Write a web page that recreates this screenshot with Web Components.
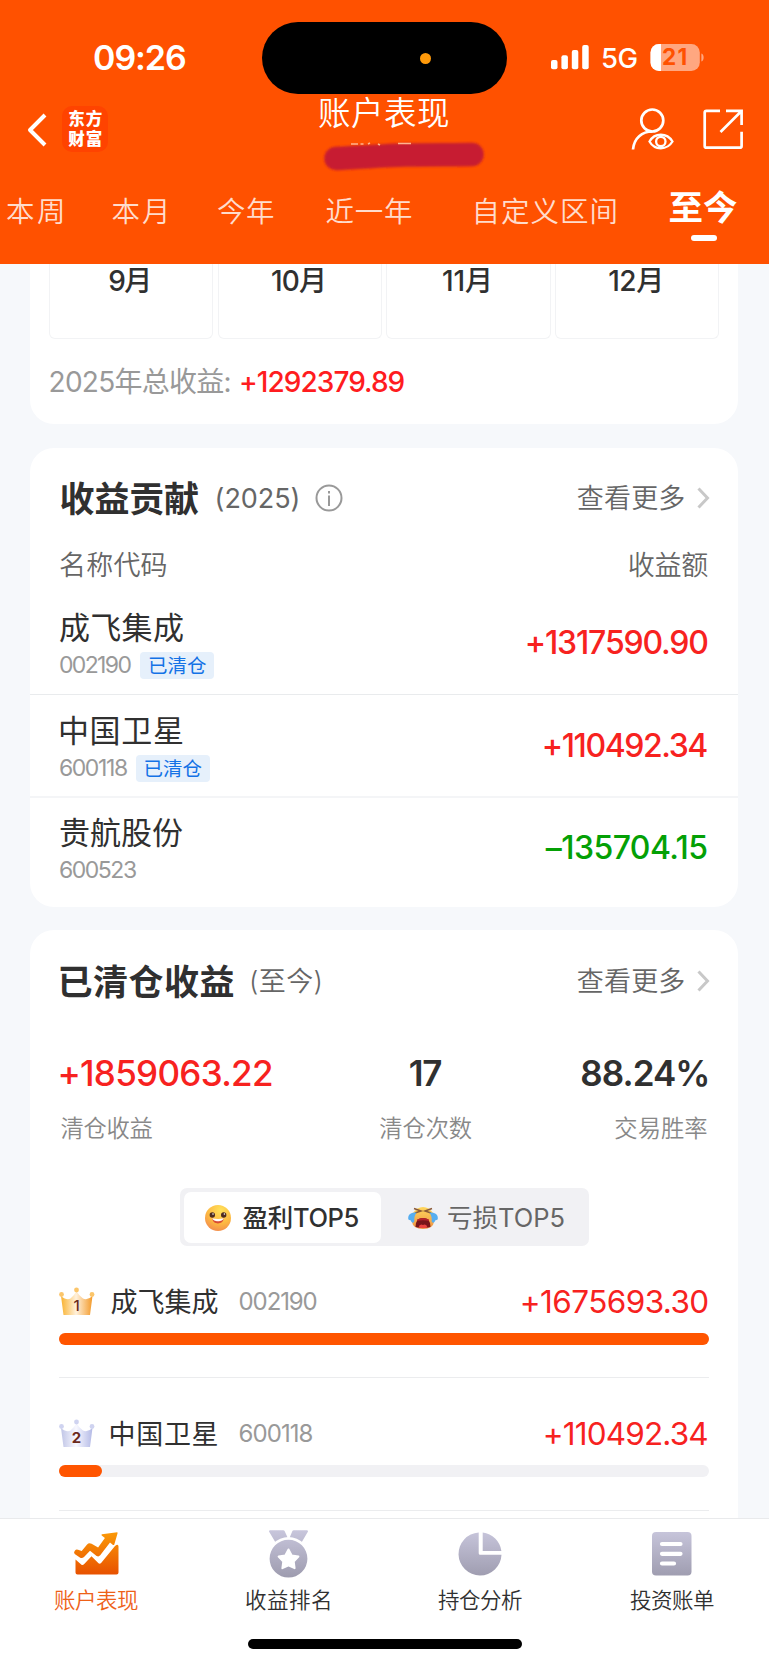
<!DOCTYPE html>
<html lang="zh-CN">
<head>
<meta charset="utf-8">
<title>账户表现</title>
<style>
html,body{margin:0;padding:0}
body{width:769px;height:1665px;overflow:hidden;background:#f6f8fb;font-family:Inter,"Noto Sans CJK SC",sans-serif;color:#303030}
</style>
</head>
<body>
<account-app></account-app>
<script>
const define = (name, html, setup) => customElements.define(name, class extends HTMLElement {
  connectedCallback() {
    if (this.shadowRoot) return;
    const t = document.createElement('template');
    t.innerHTML = html;
    this.attachShadow({ mode: 'open' }).append(t.content.cloneNode(true));
    if (setup) setup(this, this.shadowRoot);
  }
});

/* ---------- page ---------- */
define('account-app', `
<style>
:host{display:flex;flex-direction:column;width:769px;height:1665px;overflow:hidden}
main{flex:1;min-height:0;overflow:hidden;padding:0 30.700px 0 29.600px}
contribution-card{margin-top:24px}
cleared-card{margin-top:23px}
</style>
<app-header></app-header>
<main>
  <months-card></months-card>
  <contribution-card></contribution-card>
  <cleared-card></cleared-card>
</main>
<tab-bar></tab-bar>`);

/* ---------- header ---------- */
define('app-header', `
<style>
:host{display:flex;flex-direction:column;height:264px;background:#ff5100;color:#fff;flex:none}
</style>
<status-bar></status-bar>
<nav-bar></nav-bar>
<range-tabs></range-tabs>`);

define('status-bar', `
<style>
:host{display:grid;grid-template-columns:262px 245px 1fr;height:94px;flex:none}
.time{font-size:34px;font-weight:600;line-height:36px;padding:40px 0 0 94px}
.island{margin-top:22px;height:72px;border-radius:36px;background:#000;display:flex;align-items:center}
.island i{width:11px;height:11px;border-radius:50%;background:#ff9a0a;margin-left:158px}
.right{display:flex;padding-left:44px;height:30px;margin-top:43px}
.bars{width:39px;height:30px}
.g{font-size:27.5px;font-weight:500;line-height:31px;margin-left:12px}
.bat{margin-left:13px;width:55px;height:30px;display:grid}
.bat>*{grid-area:1/1}
.bat fit-text{font-size:22.5px;font-weight:700;line-height:28px;color:#ff5100;margin-left:13.500px}
</style>
<div class="time"><fit-text w="92">09:26</fit-text></div>
<div class="island"><i></i></div>
<div class="right">
  <svg class="bars" viewBox="0 0 39 30" fill="#fff"><rect y="17" width="6.5" height="9.3" rx="2"/><rect x="10.4" y="12.3" width="6.5" height="14" rx="2"/><rect x="20.8" y="7" width="6.5" height="19.3" rx="2"/><rect x="31.2" y="2" width="6.5" height="24.3" rx="2"/></svg>
  <fit-text class="g" w="34.5">5G</fit-text>
  <div class="bat">
    <svg width="55" height="30" viewBox="0 0 55 30"><defs><clipPath id="c"><rect y="1" x=".5" width="49.3" height="27" rx="8.5"/></clipPath></defs><g clip-path="url(#c)"><rect width="55" height="30" fill="#ffa780"/><rect width="11" height="30" fill="#fff"/></g><path d="M51.4 10.5c3 1 3 7 0 8z" fill="#ffa780"/></svg>
    <fit-text w="23.5">21</fit-text>
  </div>
</div>`);

define('nav-bar', `
<style>
:host{display:grid;grid-template-columns:319px 129px 1fr;height:90px;flex:none}
.left{display:flex;align-items:flex-start}
.back{width:20px;height:34px;margin:19px 0 0 26.5px}
.logo{width:46px;height:46px;border-radius:10px;background:#ff4300;margin:12px 0 0 15.5px;display:grid;grid-template-rows:20px 20px;align-content:center;justify-content:center;font-weight:900;font-size:16.500px;line-height:20px;box-sizing:border-box}
.title{font-size:32.5px;font-weight:350;line-height:36px;padding-top:2px}
.mask{display:block;width:166px;height:34px;margin:-1px 0 0 3px;overflow:visible}
.acts{display:flex;padding:13px 0 0 182px}
.acts svg{width:46px;height:46px}
.acts svg+svg{margin-left:25px}
</style>
<div class="left">
  <svg class="back" viewBox="0 0 20 34" fill="none" stroke="#fff" stroke-width="4"><path d="M18 2 3 17l15 15" stroke-linejoin="round"/></svg>
  <div class="logo"><fit-text w="33.5">东方</fit-text><fit-text w="33.5">财富</fit-text></div>
</div>
<div>
  <fit-text class="title" w="129">账户表现</fit-text>
  <svg class="mask" viewBox="0 0 166 34"><defs><filter id="b" filterUnits="userSpaceOnUse" x="-5" y="0" width="180" height="50"><feGaussianBlur stdDeviation=".9"/></filter></defs>
  <path d="M14 27.500C40 26.500 60 24.500 84 24s44-.2 66-.5" fill="none" stroke="#c71f33" stroke-width="23.500" stroke-linecap="round" filter="url(#b)"/>
  <path d="M29 13h7M38.500 13h3M46 13l2-1M56 13l2 1M76 12.500h13" stroke="#ffb48f" stroke-width="1.600"/></svg>
</div>
<div class="acts">
  <svg viewBox="0 0 46 46" fill="none" stroke="#fff" stroke-width="2.700"><circle cx="22.300" cy="13.500" r="11"/><path d="M3 42.500C4 31 12 24.500 22.500 24.500"/><path d="M19.500 34.500C24.500 25.500 37 25.500 42.500 34.500 37 43.500 24.500 43.500 19.500 34.500z" stroke-width="2.300"/><circle cx="30.800" cy="34.500" r="4.700" stroke-width="2.300"/></svg>
  <svg viewBox="0 0 46 46" fill="none" stroke="#fff" stroke-width="2.700" ><path d="M19 3.800H5.500a1.800 1.800 0 0 0-1.800 1.800v33.300a1.800 1.800 0 0 0 1.800 1.800h33.300a1.800 1.800 0 0 0 1.800-1.800V24.800M25 3.800h15.600v14.200M40.500 4 19.500 25"/></svg>
</div>`);

define('range-tabs', `
<style>
:host{display:flex;height:80px;font-size:28.500px;font-weight:350;line-height:40px;color:#ffdccc}
fit-text{margin-top:8px;flex:none}
.on{display:flex;flex-direction:column;align-items:center;color:#fff;font-size:34.500px;font-weight:700;margin-left:54px;height:60px}
.on fit-text{margin-top:3.500px}
.on i{width:26px;height:6px;border-radius:3px;background:#fff;margin:7.500px 0 0 1px}
</style>
<fit-text w="55" style="margin-left:7px">本周</fit-text>
<fit-text w="53.500" style="margin-left:50.500px">本月</fit-text>
<fit-text w="56" style="margin-left:52px">今年</fit-text>
<fit-text w="85.500" style="margin-left:52.500px">近一年</fit-text>
<fit-text w="140" style="margin-left:63.500px">自定义区间</fit-text>
<div class="on"><fit-text w="67.500">至今</fit-text><i></i></div>`);

/* ---------- cards ---------- */
define('months-card', `
<style>
:host{display:block;height:160px;background:#fff;border-radius:0 0 24px 24px;box-sizing:border-box;padding:0 19px 0 19.500px}
.row{display:grid;grid-template-columns:repeat(4,1fr);gap:4.300px;height:75px}
.row div{border:1px solid #f2f3f5;border-top:0;border-radius:0 0 6px 6px;font-size:28px;font-weight:500;line-height:34px;display:flex;justify-content:center;padding-right:5px}
.sum{display:flex;font-size:28px;line-height:40px;margin-top:23px;color:#999;font-weight:400;padding-left:1.500px}
.sum .v{font-weight:500;color:#ff1c20;margin-left:11.500px}
</style>
<div class="row"><div><fit-text w="39">9月</fit-text></div><div><fit-text w="51">10月</fit-text></div><div><fit-text w="46">11月</fit-text></div><div><fit-text w="51">12月</fit-text></div></div>
<div class="sum"><fit-text w="179">2025年总收益:</fit-text><fit-text class="v" w="163.500">+1292379.89</fit-text></div>`);

define('card-head', `
<style>
:host{display:flex;height:40px;line-height:42px;color:#666;font-size:27px;padding:0 0 0 31px;font-weight:350}
.t{font-size:35px;font-weight:700;color:#303030}
.p{margin-left:17.500px}
.info{width:28px;height:28px;margin:6px 0 0 17px}
.more{margin-left:auto}
.ar{width:16px;height:24px;margin:8px 27px 0 11px}
</style>
<fit-text class="t"></fit-text><fit-text class="p"></fit-text>
<svg class="info" viewBox="0 0 28 28" fill="none" stroke="#999" stroke-width="2"><circle cx="14" cy="14" r="12.500"/><path d="M14 11.500v10.500M14 7v2.400"/></svg>
<fit-text class="more" w="106.500">查看更多</fit-text>
<svg class="ar" viewBox="0 0 16 24" fill="none" stroke="#c8c8c8" stroke-width="3"><path d="M3.500 2.500l9 9.500-9 9.500"/></svg>`,
(h, r) => {
  const [t, p] = r.querySelectorAll('fit-text');
  t.textContent = h.getAttribute('label'); t.setAttribute('w', h.getAttribute('lw'));
  p.textContent = h.getAttribute('period'); p.setAttribute('w', h.getAttribute('pw'));
  if (h.hasAttribute('info')) p.style.fontWeight = 400; else r.querySelector('.info').remove();
});

define('contribution-card', `
<style>
:host{display:block;height:459px;background:#fff;border-radius:24px;box-sizing:border-box;padding-top:30px}
.cols{display:flex;justify-content:space-between;padding:0 30px 0 30.500px;font-size:27px;font-weight:350;line-height:42px;color:#666;margin-top:27px;height:47px}
stock-row:nth-of-type(2){border-top:1px solid #e9ebed;height:77px}
stock-row:nth-of-type(3){border-top:2px solid #f4f5f7;padding-top:23px}
</style>
<card-head label="收益贡献" lw="138.500" period="(2025)" pw="81" info></card-head>
<div class="cols"><fit-text w="106.500">名称代码</fit-text><fit-text w="79.500">收益额</fit-text></div>
<stock-row name="成飞集成" code="002190" cw="71.500" tag="已清仓" amount="+1317590.90" aw="180.500"></stock-row>
<stock-row name="中国卫星" code="600118" cw="67" tag="已清仓" amount="+110492.34" aw="163.500"></stock-row>
<stock-row name="贵航股份" code="600523" cw="76" amount="–135704.15" aw="161.500" down></stock-row>`);

define('stock-row', `
<style>
:host{display:flex;justify-content:space-between;padding:24px 31px 0 30.300px;height:78px;box-sizing:content-box}
.n{font-size:31px;font-weight:400;line-height:40px;margin-top:-8px}
.c{display:flex;align-items:center;height:28px;margin-top:3px;font-size:23px;line-height:29px;color:#999;font-weight:400}
.tag{font-size:19.500px;font-weight:400;line-height:28px;height:27px;background:#e6f0fb;color:#1472e6;border-radius:4px;padding:0 8.500px;margin-left:9px}
.a{font-size:32px;font-weight:500;line-height:40px;color:#f7221f;margin-top:6.500px}
:host([down]) .a{color:#04a005}
</style>
<div><fit-text class="n" w="123"></fit-text><div class="c"><fit-text class="code"></fit-text><div class="tag"><fit-text w="57"></fit-text></div></div></div>
<fit-text class="a"></fit-text>`,
(h, r) => {
  const g = k => h.getAttribute(k);
  r.querySelector('.n').textContent = g('name');
  const c = r.querySelector('.code'); c.textContent = g('code'); c.setAttribute('w', g('cw'));
  if (g('tag')) r.querySelector('.tag fit-text').textContent = g('tag'); else r.querySelector('.tag').remove();
  const a = r.querySelector('.a'); a.textContent = g('amount'); a.setAttribute('w', g('aw'));
});

define('cleared-card', `
<style>
:host{display:block;height:640px;background:#fff;border-radius:24px 24px 0 0;box-sizing:border-box;padding-top:31px}
.stats{display:flex;justify-content:space-between;padding:0 31px 0 30.800px;margin-top:51px;height:136px}
.stats div{display:flex;flex-direction:column;align-items:center}
.stats div:first-child{align-items:flex-start}
.stats div:last-child{align-items:flex-end}
.stats div:nth-child(2){margin-left:-2px}
.v{font-size:35px;font-weight:600;line-height:42px}
.v.up{color:#f7221f;font-weight:500}
.l{font-size:23.300px;font-weight:350;line-height:32px;color:#888;margin-top:19px}
.list{padding:0 29.500px 0 29px}
</style>
<card-head label="已清仓收益" lw="173" period="(至今)" pw="69.500"></card-head>
<div class="stats">
  <div><fit-text class="v up" w="211.500">+1859063.22</fit-text><fit-text class="l" w="92">清仓收益</fit-text></div>
  <div><fit-text class="v" w="31.500">17</fit-text><fit-text class="l" w="92.500">清仓次数</fit-text></div>
  <div><fit-text class="v" w="126">88.24%</fit-text><fit-text class="l" w="92">交易胜率</fit-text></div>
</div>
<top-switch></top-switch>
<div class="list">
  <rank-row rank="1" name="成飞集成" code="002190" cw="77" amount="+1675693.30" aw="185.500" fill="100"></rank-row>
  <rank-row rank="2" name="中国卫星" code="600118" cw="73" amount="+110492.34" aw="162.500" fill="6.600"></rank-row>
</div>`);

define('top-switch', `
<style>
:host{display:flex;width:409.500px;height:58px;background:#f1f1f4;border-radius:7px;margin-left:150px;box-sizing:border-box;padding:4px 0 3px 4px;font-size:25.500px;line-height:52px;color:#666;font-weight:400}
div{display:flex;align-items:center}
.on{width:197px;background:#fff;border-radius:7px;color:#303030;font-weight:500}
.on svg{margin:0 9.500px 0 19.500px}
.off svg{margin:0 9.500px 0 26px}
</style>
<div class="on">
<svg width="30" height="30" viewBox="0 0 30 30"><defs><radialGradient id="f" cx=".6" cy=".2" r=".85"><stop stop-color="#ffe25a"/><stop offset=".6" stop-color="#fdb842"/><stop offset="1" stop-color="#f28a4e"/></radialGradient></defs><circle cx="15" cy="15" r="13" fill="url(#f)"/><circle cx="9.300" cy="12" r="2.700" fill="#4d2b20"/><circle cx="20.700" cy="12" r="2.700" fill="#4d2b20"/><circle cx="10" cy="11" r=".8" fill="#fff"/><circle cx="21.400" cy="11" r=".8" fill="#fff"/><path d="M9.500 15.500q5.500 1.500 11 0c0 6.500-11 6.500-11 0z" fill="#d94b35"/><path d="M9.500 15.200q5.500 1.500 11 0c0 4-11 4-11 0z" fill="#fff"/></svg>
<fit-text w="116">盈利TOP5</fit-text></div>
<div class="off">
<svg width="32" height="30" viewBox="0 0 32 30"><defs><linearGradient id="g" x2="0" y2="1"><stop stop-color="#ffd75c"/><stop offset="1" stop-color="#ee9142"/></linearGradient></defs><path d="M6 10Q10 4 16 4t10 6l1 9q-1 7-11 7T5 19z" fill="url(#g)"/><path d="M7 5.500 14 8l-6 2M25 5.500 18 8l6 2" fill="none" stroke="#8b5a37" stroke-width="1.500"/><path d="M8.500 24q0-9 7.500-9t7.500 9q-7.500 2-15 0z" fill="#78151a"/><path d="M10 16.500q6-3 12 0v1.500q-6-1.500-12 0z" fill="#b5222a"/><path d="M11.500 24.500q1-4 4.500-2.500 3.500-1.500 4.500 2.500-4.500 1-9 0z" fill="#e8433f"/><path d="M9.500 9.500q-6.500-.5-8 3.500-1 4 1 4 1.800 0 1.800 1.800 1.800 2.200 3-.3Q7 13 9.500 9.500zM22.500 9.500q6.500-.5 8 3.500 1 4-1 4-1.800 0-1.800 1.800-1.800 2.200-3-.3Q25 13 22.500 9.500z" fill="#56aef0"/></svg>
<fit-text w="115.500">亏损TOP5</fit-text></div>`);

define('rank-row', `
<style>
:host{display:block;height:95.300px;padding-top:36px;border-bottom:1px solid #ebecee}
.top{display:flex;align-items:center;height:40px;padding:0 1.500px 0 0}
.crown{width:36px;height:30px;margin-top:-1px}
.n{font-size:27px;line-height:41px;margin-left:16px;color:#303030}
.c{font-size:24px;line-height:40px;font-weight:400;color:#999;margin-left:22px}
.a{font-size:31.500px;line-height:40px;font-weight:400;color:#f7221f;margin-left:auto}
.bar{height:11.500px;border-radius:6px;background:#f1f1f4;margin-top:11px}
.bar i{display:block;height:100%;border-radius:6px;background:#ff5500}
</style>
<div class="top">
<svg class="crown" viewBox="0 0 36 30"><defs><linearGradient id="k"><stop/><stop offset=".48"/><stop offset="1"/></linearGradient></defs><g fill="url(#k)"><path d="M2 9q6 5 9.500 2.500Q15 9 17.500 4q2.500 5 6.500 7.500T33.500 9L31 28H4.500z"/></g><g class="d"><circle cx="2.500" cy="7.500" r="2.400"/><circle cx="17.500" cy="3" r="2.400"/><circle cx="33" cy="7.500" r="2.400"/></g><text x="17.500" y="23.500" text-anchor="middle" font-family="Inter" font-size="15" fill="#6b2a1c"></text></svg>
<fit-text class="n" w="107"></fit-text><fit-text class="c"></fit-text><fit-text class="a"></fit-text></div>
<div class="bar"><i></i></div>`,
(h, r) => {
  const g = k => h.getAttribute(k), one = g('rank') === '1';
  const cols = one ? ['#f9b22f', '#fff1dc', '#f39a2a'] : ['#c0c5e6', '#f8f8ff', '#b4bae6'];
  r.querySelectorAll('stop').forEach((s, i) => s.setAttribute('stop-color', cols[i]));
  r.querySelector('.d').setAttribute('fill', one ? '#fbc56a' : '#cfd3f0');
  const t = r.querySelector('text'); t.textContent = g('rank'); t.setAttribute('font-weight', one ? 500 : 700);
  r.querySelector('.n').textContent = g('name');
  const c = r.querySelector('.c'); c.textContent = g('code'); c.setAttribute('w', g('cw'));
  const a = r.querySelector('.a'); a.textContent = g('amount'); a.setAttribute('w', g('aw'));
  r.querySelector('i').style.width = g('fill') + '%';
});

/* ---------- bottom bar ---------- */
define('tab-bar', `
<style>
:host{display:block;height:147px;background:#fff;border-top:1px solid #e9eaec;flex:none;box-sizing:border-box}
nav{display:grid;grid-template-columns:repeat(4,192px);height:120px}
.home{width:274px;height:10px;border-radius:5px;background:#000;margin:0 auto 0 247.500px}
</style>
<nav>
<tab-item active label="账户表现"><svg width="50" height="52" viewBox="0.500 0 50 52"><defs><linearGradient id="o" gradientUnits="userSpaceOnUse" x1="0" y1="4" x2="0" y2="46"><stop stop-color="#fb9a08"/><stop offset="1" stop-color="#e85200"/></linearGradient></defs><g fill="url(#o)"><path d="M46.700 4.300 31.500 6.200q-1 .4-.3 1.200l3.200 2.600-6.800 9.500-6.500-3.700q-2.600-1.500-4.500.6l-5.400 6.700-3.700-1.300q-1.800-.6-3 .6-1.800 1.800-.3 3.700l5.500 3.600q2 1 3.800-.8l6-6.200 6.600 5.200q2 1.200 3.600-.6l9.800-12.700 3 2.300q1 .5 1.300-.5L47 5.600q.3-1.100-.3-1.300z"/><path d="M5 31.500l6 5.300q1.300.8 2.500-.5l7.500-8 7 7q1.300 1 2.600-.3L44.500 18q3.300-2.500 3.500.5v26q0 2-2 2H7q-2 0-2-2z"/></g></svg></tab-item>
<tab-item label="收益排名"><svg width="50" height="52" viewBox="-.500 0 50 52"><defs><linearGradient id="p" gradientUnits="userSpaceOnUse" x1="0" y1="2" x2="0" y2="50"><stop stop-color="#c8c6dc"/><stop offset="1" stop-color="#9d9bae"/></linearGradient></defs><g fill="url(#p)"><path d="M6.500 2.300h13.200q1 0 1.400.8l3.200 7-3 1.700L12.300 14q-.6 0-1-.8L5.500 3.500q-.3-1 1-1.200zM43.500 2.300H30.300q-1 0-1.400.8L26 10.100q6 .4 11.200 4.100 1 0 1.400-.8l5.900-9.900q.3-1-1-1.200z"/><circle cx="25" cy="30.500" r="21.500" fill="#fff"/><path d="M25 11.800a18.900 18.900 0 1 0 0 37.800 18.900 18.900 0 0 0 0-37.800z"/></g><path d="M25 21.500l3.200 6 6.700 1.100-4.700 4.900.9 6.700-6.100-2.900-6.100 2.900.9-6.700-4.700-4.900 6.700-1.100z" fill="#fff" stroke="#fff" stroke-width="2" stroke-linejoin="round"/></svg></tab-item>
<tab-item label="持仓分析"><svg width="50" height="52" viewBox="0 0 50 52"><defs><linearGradient id="p" gradientUnits="userSpaceOnUse" x1="0" y1="2" x2="0" y2="50"><stop stop-color="#cac8de"/><stop offset="1" stop-color="#9a98ab"/></linearGradient></defs><path fill="url(#p)" d="M23.700 4.500A21.500 21.500 0 1 0 46.500 26.800H25.200q-1.500 0-1.500-1.500zM27.700 4.500V23h18.700A21.500 21.500 0 0 0 27.700 4.500z"/></svg></tab-item>
<tab-item label="投资账单"><svg width="50" height="52" viewBox="0 0 50 52"><defs><linearGradient id="p" gradientUnits="userSpaceOnUse" x1="0" y1="2" x2="0" y2="50"><stop stop-color="#c8c6dc"/><stop offset="1" stop-color="#9a98ab"/></linearGradient></defs><rect x="5" y="4" width="39.500" height="43.500" rx="4" fill="url(#p)"/><path d="M15 16h18.500M15 25.800h18.500M15 35.500h12" stroke="#fff" stroke-width="4.200" stroke-linecap="round"/></svg></tab-item>
</nav>
<div class="home"></div>`);

define('tab-item', `
<style>
:host{display:flex;flex-direction:column;align-items:center;color:#303030}
:host([active]){color:#ee6118}
::slotted(svg){display:block;margin-top:9px}
fit-text{font-size:21.500px;font-weight:350;line-height:30px;margin:5px 0 0 0}
</style>
<slot></slot><fit-text w="84"></fit-text>`,
(h, r) => { r.querySelector('fit-text').textContent = h.getAttribute('label'); });

/* Text whose box is exactly its ink width: tracking is spread so the glyphs span "w" pixels. */
const pen = document.createElement('canvas').getContext('2d');
customElements.define('fit-text', class extends HTMLElement {
  connectedCallback() {
    if (this.shadowRoot) return;
    const root = this.attachShadow({ mode: 'open' });
    root.innerHTML = '<style>:host{display:block;white-space:nowrap}span{display:block}</style><span><slot></slot></span>';
    const cs = getComputedStyle(this), s = this.textContent, w = parseFloat(this.getAttribute('w'));
    pen.font = `${cs.fontWeight} ${cs.fontSize} ${cs.fontFamily}`;
    const m = pen.measureText(s), ink = m.actualBoundingBoxLeft + m.actualBoundingBoxRight;
    const span = root.querySelector('span');
    this.style.width = w + 'px';
    span.style.marginLeft = m.actualBoundingBoxLeft + 'px';
    span.style.letterSpacing = (w - ink) / ([...s].length - 1) + 'px';
  }
});
</script>
</body>
</html>
